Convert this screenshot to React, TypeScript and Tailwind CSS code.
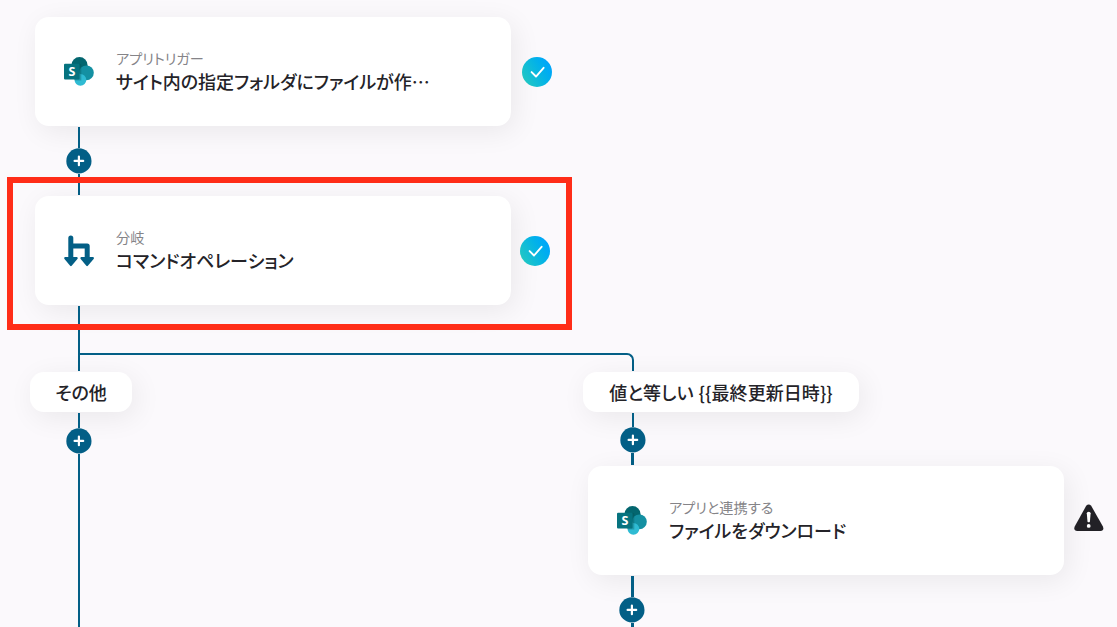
import React from 'react';

function SharePointIcon() {
  return (
    <svg width="30" height="30" viewBox="0 0 30 30" className="shrink-0">
      <circle cx="15.5" cy="8.2" r="8.1" fill="#03666f" />
      <circle cx="22.4" cy="15.8" r="7.4" fill="#1490a2" />
      <circle cx="16.4" cy="22.8" r="5.9" fill="#2fbbd3" />
      <path d="M8 7h8.100c.7 0 1.200.5 1.200 1.200V23.500h-6.500L8 20z" fill="#024b50" opacity=".3" />
      <rect x="0" y="6.800" width="15.600" height="15.700" rx="1.100" fill="#06737f" />
      <text x="7.900" y="19.200" textAnchor="middle" fontSize="12.500" fontWeight="700" fill="#fff" fontFamily="Open Sans, sans-serif">S</text>
    </svg>
  );
}

function BranchIcon() {
  return (
    <svg width="30" height="32" viewBox="0 0 30 32" className="shrink-0">
      <path d="M6.800 24V3M6.800 10.900H23.200V24" fill="none" stroke="#035f86" strokeWidth="5" strokeLinecap="round" strokeLinejoin="round" />
      <path d="M1 22H12.900Q14.300 22.500 13.400 24L7.700 30.800Q6.900 31.600 6.100 30.800L.5 24Q-.4 22.500 1 22Z" fill="#035f86" />
      <path d="M17.200 22H29.100Q30.500 22.500 29.600 24L23.900 30.800Q23.100 31.600 22.300 30.800L16.700 24Q15.800 22.500 17.200 22Z" fill="#035f86" />
    </svg>
  );
}

function DoneBadge() {
  return (
    <div className="size-[30px] rounded-full bg-linear-60 from-[#25c9bd] from-5% to-[#00a6fa] to-85%">
      <svg width="30" height="30" viewBox="0 0 30 30">
        <path d="M9.600 15.100L14 19.500L21.600 10.800" fill="none" stroke="#fff" strokeWidth="1.900" strokeLinecap="round" strokeLinejoin="round" />
      </svg>
    </div>
  );
}

function WarningBadge() {
  return (
    <svg width="30" height="28" viewBox="0 0 30 28" className="mb-[6px]">
      <path d="M12.200 1.800Q14.700 -1 17.200 1.800L28.900 22.500Q30.500 26.800 26.500 27H3.300Q-.8 26.800 .7 22.500Z" fill="#222126" />
      <path d="M12.800 9.200Q12.800 7.700 14.700 7.700T16.600 9.200L15.900 17.700Q14.700 19 13.500 17.700Z" fill="#fff" />
      <circle cx="14.700" cy="21.900" r="1.900" fill="#fff" />
    </svg>
  );
}

function AddButton() {
  return (
    <button className="shrink-0">
      <svg width="26" height="26" viewBox="0 0 26 26" className="block">
        <circle cx="12.900" cy="12.900" r="12.600" fill="#035f86" />
        <path d="M12.900 8.600V17.200M8.600 12.900H17.200" stroke="#fff" strokeWidth="2.200" strokeLinecap="round" />
      </svg>
    </button>
  );
}

function StepCard({ icon, label, title, badge, gap }: any) {
  return (
    <div className={`flex items-center ${gap}`}>
      <div className="flex h-[109px] w-[476px] shrink-0 items-center gap-[22px] rounded-[14px] bg-white pl-[29px] shadow-[4px_6px_28px_rgba(20,15,20,0.07)]">
        {icon}
        <div>
          <p className="text-[14.2px] leading-[19px] text-[#858488]">{label}</p>
          <p className="pt-px text-[18px] leading-[25px] font-medium whitespace-nowrap">{title}</p>
        </div>
      </div>
      {badge}
    </div>
  );
}

function ConditionLabel({ children, className }: { children: React.ReactNode; className: string }) {
  return (
    <div className={`flex h-10 shrink-0 items-center justify-center rounded-[14px] bg-white text-[18px] font-medium whitespace-nowrap shadow-[4px_6px_28px_rgba(20,15,20,0.07)] ${className}`}>
      {children}
    </div>
  );
}

function Line({ className }: { className: string }) {
  return <div className={`bg-[#035f86] ${className}`} />;
}

export default function App() {
  return (
    <div
      lang="ja"
      className="relative flex h-[627px] w-[1117px] overflow-hidden bg-[#fbf9fc] font-['Noto_Sans_CJK_JP',sans-serif] text-[#242328] [font-feature-settings:'palt']"
    >
      {/* trigger, branch step and the default path */}
      <div className="flex w-[588px] shrink-0 flex-col pt-[17px] pl-[35px]">
        <StepCard
          gap="gap-[11px]"
          icon={<SharePointIcon />}
          label="アプリトリガー"
          title="サイト内の指定フォルダにファイルが作…"
          badge={<DoneBadge />}
        />
        <div className="flex h-[70px] w-[88px] flex-col items-center pt-px pb-px">
          <Line className="w-0.5 flex-1" />
          <AddButton />
          <Line className="h-[21px] w-0.5" />
        </div>
        <StepCard
          gap="gap-[9px]"
          icon={<BranchIcon />}
          label="分岐"
          title="コマンドオペレーション"
          badge={<DoneBadge />}
        />
        <div className="flex h-[48px] w-[88px] justify-center pt-px">
          <Line className="w-0.5" />
        </div>
        {/* elbow running over to the conditional path */}
        <div className="mb-px ml-[43px] h-[18px] w-[556px] shrink-0 rounded-tr-[7px] border-x-2 border-t-2 border-[#035f86]" />
        <ConditionLabel className="-ml-[5px] w-[102px]">その他</ConditionLabel>
        <div className="flex w-[88px] flex-1 flex-col items-center pt-px">
          <Line className="h-[15px] w-0.5" />
          <AddButton />
          <Line className="w-0.5 flex-1" />
        </div>
      </div>

      {/* conditional path */}
      <div className="flex flex-col pt-[372px]">
        <ConditionLabel className="-ml-[5px] w-[276px] tracking-[0.06px] [word-spacing:1px]">
          {'値と等しい {{最終更新日時}}'}
        </ConditionLabel>
        <div className="flex h-[54px] w-[90px] shrink-0 flex-col items-center pt-px pb-px">
          <Line className="h-[14px] w-0.5" />
          <AddButton />
          <Line className="mr-px w-[3px] flex-1" />
        </div>
        <StepCard
          gap="gap-[10px]"
          icon={<SharePointIcon />}
          label="アプリと連携する"
          title="ファイルをダウンロード"
          badge={<WarningBadge />}
        />
        <div className="flex w-[88px] flex-1 flex-col items-center pt-px">
          <Line className="ml-px h-[21px] w-[3px]" />
          <AddButton />
          <Line className="ml-px w-[3px] flex-1" />
        </div>
      </div>

      {/* highlight around the branch step */}
      <div className="pointer-events-none absolute top-[177px] left-[6.5px] h-[152.5px] w-[565px] border-6 border-[#ff2d18]" />
    </div>
  );
}
